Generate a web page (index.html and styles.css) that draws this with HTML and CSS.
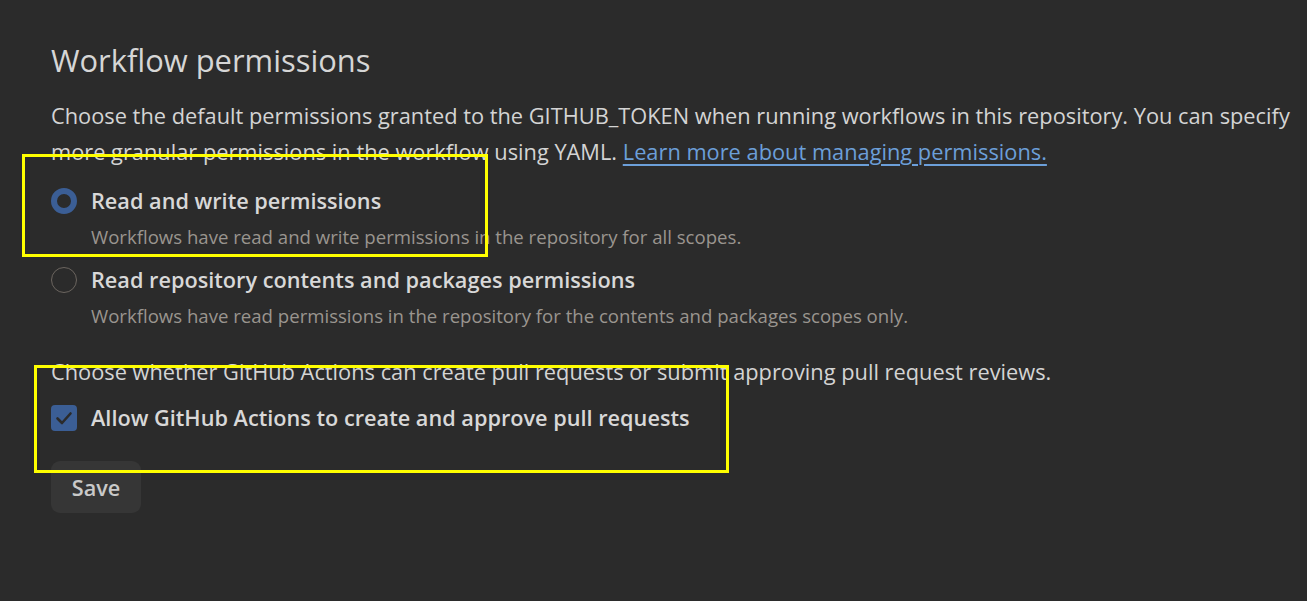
FILE: index.html
```html
<!DOCTYPE html>
<html>
<head>
<meta charset="utf-8">
<link rel="stylesheet" href="styles.css">
</head>
<body>
<main class="page">
  <h2 class="title">Workflow permissions</h2>
  <p class="intro">Choose the default permissions granted to the GITHUB_TOKEN when running workflows in this repository. You can specify<br>more granular permissions in the workflow using YAML. <a class="link" href="#">Learn more about managing permissions.</a></p>

  <div class="option">
    <span class="radio radio-on"></span>
    <div class="option-text">
      <div class="label">Read and write permissions</div>
      <div class="note">Workflows have read and write permissions in the repository for all scopes.</div>
    </div>
  </div>
  <div class="option">
    <span class="radio"></span>
    <div class="option-text">
      <div class="label">Read repository contents and packages permissions</div>
      <div class="note">Workflows have read permissions in the repository for the contents and packages scopes only.</div>
    </div>
  </div>

  <p class="intro second">Choose whether GitHub Actions can create pull requests or submit approving pull request reviews.</p>
  <div class="check-row">
    <span class="checkbox">
      <svg width="26" height="26" viewBox="0 0 26 26"><path d="M6.5 13.5 L11 18 L19.5 8.5" fill="none" stroke="#2b2b2b" stroke-width="2.6" stroke-linecap="round" stroke-linejoin="round"/></svg>
    </span>
    <span class="label">Allow GitHub Actions to create and approve pull requests</span>
  </div>
  <button class="save">Save</button>

  <div class="mark mark-one"></div>
  <div class="mark mark-two"></div>
</main>
</body>
</html>
```

FILE: styles.css
```css
html, body {
  margin: 0;
  padding: 0;
  background: #2b2b2b;
}
.page {
  position: relative;
  height: 601px;
  box-sizing: border-box;
  padding: 36px 0 0 51px;
  font-family: "Open Sans", "Noto Sans", sans-serif;
  color: #d4d4d4;
}
.title {
  margin: 0;
  font-size: 30.9px;
  font-weight: 400;
  line-height: 48px;
  color: #d6d6d6;
}
.intro {
  margin: 14px 0 0;
  font-size: 21.8px;
  line-height: 36px;
  white-space: nowrap;
  color: #d4d4d4;
}
.link {
  color: #6c9fd9;
  text-decoration: underline;
  text-underline-offset: 4px;
}
.option {
  display: flex;
  align-items: flex-start;
  gap: 14px;
  margin-top: 13px;
}
.option + .option {
  margin-top: 7px;
}
.radio {
  width: 26px;
  height: 26px;
  box-sizing: border-box;
  border-radius: 50%;
  border: 1px solid #6b655f;
  flex: none;
  margin-top: 5px;
}
.radio-on {
  border: 6.5px solid #3b5e95;
}
.label {
  font-size: 21.7px;
  font-weight: 600;
  line-height: 36px;
  color: #d8d8d8;
}
.note {
  font-size: 18.6px;
  line-height: 36px;
  color: #9a958f;
}
.second {
  margin-top: 20px;
}
.check-row {
  display: flex;
  align-items: center;
  gap: 14px;
  margin-top: 10px;
}
.checkbox {
  width: 26px;
  height: 26px;
  border-radius: 4px;
  background: #3b5e95;
  flex: none;
  display: block;
}
.checkbox svg {
  display: block;
}
.save {
  display: block;
  margin-top: 25px;
  width: 90px;
  height: 52px;
  border: none;
  border-radius: 9px;
  background: #363636;
  color: #c9c9c9;
  font-family: inherit;
  font-size: 21.7px;
  font-weight: 600;
  padding: 0;
}
.mark {
  position: absolute;
  border: 3px solid #ffff00;
  box-sizing: border-box;
  pointer-events: none;
}
.mark-one {
  left: 22px;
  top: 154px;
  width: 466px;
  height: 103px;
}
.mark-two {
  left: 34px;
  top: 365px;
  width: 695px;
  height: 108px;
}
```
